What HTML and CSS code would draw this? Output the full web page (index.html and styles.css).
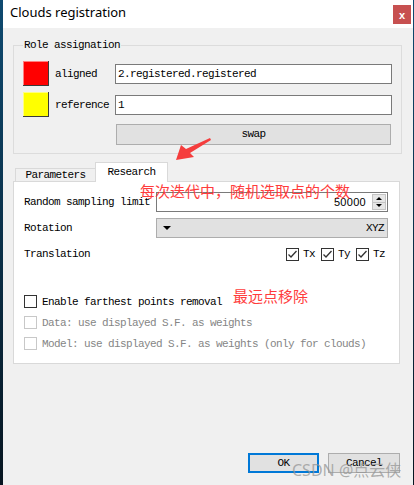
FILE: index.html
```html
<!DOCTYPE html>
<html lang="en">

<head>
    <meta charset="UTF-8">
    <meta name="viewport" content="width=device-width, initial-scale=1.0">
    <title>Clouds registration</title>
    <link rel="stylesheet" href="styles.css">
</head>

<body>
    <div class="screen">
        <div class="window">
            <div class="titlebar">
                <span class="title">Clouds registration</span>
                <span class="close">x</span>
            </div>
            <div class="content">
                <fieldset class="group">
                    <legend>Role assignation</legend>
                    <div class="roles">
                        <span class="swatch red"></span>
                        <span class="role-label">aligned</span>
                        <div class="field">2.registered.registered</div>
                        <span class="swatch yellow"></span>
                        <span class="role-label">reference</span>
                        <div class="field">1</div>
                        <div class="swap">swap</div>
                    </div>
                </fieldset>

                <div class="tabs">
                    <div class="tab">Parameters</div>
                    <div class="tab active">Research</div>
                </div>
                <div class="pane">
                    <div class="form-row">
                        <span>Random sampling limit</span>
                        <div class="spinbox">
                            <span class="spin-value">50000</span>
                            <span class="spin-arrows">
                                <span class="spin-btn"><i class="tri-up"></i></span>
                                <span class="spin-btn"><i class="tri-down"></i></span>
                            </span>
                        </div>
                    </div>
                    <div class="form-row">
                        <span>Rotation</span>
                        <div class="combo">
                            <i class="tri-down big"></i>
                            <span>XYZ</span>
                        </div>
                    </div>
                    <div class="form-row">
                        <span>Translation</span>
                        <div class="axes">
                            <label class="check"><span class="box"><svg width="11" height="11" viewBox="0 0 11 11"><polyline points="1.5,5.5 4,8 9.5,2" fill="none" stroke="#333" stroke-width="1.3"/></svg></span>Tx</label>
                            <label class="check"><span class="box"><svg width="11" height="11" viewBox="0 0 11 11"><polyline points="1.5,5.5 4,8 9.5,2" fill="none" stroke="#333" stroke-width="1.3"/></svg></span>Ty</label>
                            <label class="check"><span class="box"><svg width="11" height="11" viewBox="0 0 11 11"><polyline points="1.5,5.5 4,8 9.5,2" fill="none" stroke="#333" stroke-width="1.3"/></svg></span>Tz</label>
                        </div>
                    </div>

                    <div class="options">
                        <label class="check option"><span class="box"></span>Enable farthest points removal</label>
                        <label class="check option disabled"><span class="box"></span>Data: use displayed S.F. as weights</label>
                        <label class="check option disabled"><span class="box"></span>Model: use displayed S.F. as weights (only for clouds)</label>
                    </div>
                </div>

                <div class="actions">
                    <div class="btn default">OK</div>
                    <div class="btn">Cancel</div>
                </div>
            </div>
        </div>

        <!-- annotations drawn over the screenshot -->
        <svg class="arrow" width="40" height="26" viewBox="0 0 40 26">
            <polygon points="0,22 5,7 10,11 34,0 35,2 14,15 18,19" fill="#f53d3d"/>
        </svg>
        <div class="note note-sampling">每次迭代中，随机选取点的个数</div>
        <div class="note note-removal">最远点移除</div>
        <div class="watermark">CSDN @点云侠</div>
    </div>
</body>

</html>
```

FILE: styles.css
```css
* {
    box-sizing: border-box;
    margin: 0;
    padding: 0;
}

body {
    width: 414px;
    height: 485px;
    overflow: hidden;
    background: linear-gradient(#0e4a70, #071520);
    font-family: "Liberation Mono", monospace;
    font-size: 11px;
    letter-spacing: -0.6px;
    color: #000;
}

.screen {
    position: relative;
    height: 485px;
    padding-left: 3px;
}

.window {
    width: 410px;
    height: 485px;
    background: #f0f0f0;
    display: flex;
    flex-direction: column;
}

.titlebar {
    height: 28px;
    flex-shrink: 0;
    background: white;
    display: flex;
    justify-content: space-between;
    align-items: flex-start;
    padding: 0 2px 0 7px;
}

.title {
    font-family: "Noto Sans", sans-serif;
    font-size: 13px;
    letter-spacing: 0;
    line-height: 25px;
}

.close {
    margin-top: 5px;
    width: 18px;
    height: 19px;
    background: #c75050;
    color: white;
    font-family: "Liberation Sans", sans-serif;
    font-weight: bold;
    font-size: 11px;
    letter-spacing: 0;
    display: flex;
    align-items: center;
    justify-content: center;
}

.content {
    flex: 1;
    display: flex;
    flex-direction: column;
    padding: 10px 11px 12px 10px;
}

/* Role assignation */
.group {
    border: 1px solid #dcdcdc;
    padding: 0 9px 8px 9px;
}

.group legend {
    padding: 0 1px;
    line-height: 14px;
}

.roles {
    display: grid;
    grid-template-columns: 32px 60px 1fr;
    row-gap: 6px;
    align-items: center;
    padding-top: 9px;
}

.swatch {
    width: 26px;
    height: 25px;
    box-shadow: inset -1px -1px 0 #3a3a3a, inset 1px 1px 0 rgba(255, 255, 255, 0.5);
}

.red {
    background: #ff0000;
}

.yellow {
    background: #ffff00;
}

.role-label {
    white-space: nowrap;
}

.field {
    height: 20px;
    background: white;
    border: 1px solid #7a7a7a;
    padding-left: 2px;
    line-height: 18px;
}

.swap {
    grid-column: 3;
    margin: 1px 1px 0;
    height: 21px;
    background: #e1e1e1;
    border: 1px solid #adadad;
    text-align: center;
    line-height: 19px;
}

/* tabs */
.tabs {
    margin: 8px 2px 0 0;
    height: 19px;
    display: flex;
    align-items: flex-end;
    padding-left: 2px;
}

.tab {
    height: 13px;
    width: 81px;
    border: 1px solid #d9d9d9;
    border-bottom: none;
    text-align: center;
    line-height: 13px;
}

.tab.active {
    position: relative;
    height: 20px;
    width: 73px;
    margin-left: -1px;
    margin-bottom: -1px;
    background: white;
    line-height: 18px;
}

.pane {
    margin-right: 2px;
    height: 183px;
    background: white;
    border: 1px solid #d9d9d9;
    padding: 10px 11px 0 10px;
}

.form-row {
    display: grid;
    grid-template-columns: 132px 1fr;
    align-items: center;
    height: 20px;
    margin-bottom: 6px;
}

.spinbox {
    height: 20px;
    background: white;
    border: 1px solid #7a7a7a;
    display: flex;
    justify-content: flex-end;
    align-items: center;
    padding-right: 1px;
}

.spin-value {
    font-family: "Liberation Sans", sans-serif;
    font-size: 11px;
    letter-spacing: 0.3px;
    margin-right: 6px;
}

.spin-arrows {
    width: 14px;
    height: 16px;
    display: flex;
    flex-direction: column;
    border: 1px solid #c4c4c4;
    background: #e6e6e6;
}

.spin-btn {
    flex: 1;
    display: flex;
    align-items: center;
    justify-content: center;
}

.spin-btn + .spin-btn {
    border-top: 1px solid #c4c4c4;
}

.tri-up {
    border-left: 3px solid transparent;
    border-right: 3px solid transparent;
    border-bottom: 3px solid #000;
}

.tri-down {
    border-left: 3px solid transparent;
    border-right: 3px solid transparent;
    border-top: 3px solid #000;
}

.tri-down.big {
    border-left-width: 4px;
    border-right-width: 4px;
    border-top-width: 4px;
}

.combo {
    height: 20px;
    background: #e1e1e1;
    border: 1px solid #adadad;
    display: flex;
    justify-content: space-between;
    align-items: center;
    padding: 0 3px 0 6px;
}

.axes {
    display: flex;
    justify-content: flex-end;
    gap: 6px;
    padding-right: 3px;
}

.check {
    display: flex;
    align-items: center;
    gap: 4px;
}

.box {
    width: 13px;
    height: 13px;
    border: 1px solid #333;
    background: white;
    display: flex;
    align-items: center;
    justify-content: center;
}

.options {
    padding-top: 21px;
}

.option {
    height: 21px;
    gap: 5px;
}

.option.disabled {
    color: #858585;
}

.option.disabled .box {
    border-color: #c8c8c8;
}

/* dialog buttons */
.actions {
    margin-top: auto;
    margin-right: 2px;
    display: flex;
    justify-content: flex-end;
    gap: 9px;
}

.btn {
    width: 72px;
    height: 20px;
    background: #e1e1e1;
    border: 1px solid #adadad;
    text-align: center;
    line-height: 18px;
}

.btn.default {
    width: 71px;
    border: 2px solid #0078d7;
    line-height: 16px;
}

/* annotations */
.arrow {
    position: absolute;
    left: 176px;
    top: 138px;
}

.note {
    position: absolute;
    font-family: "Noto Sans CJK SC", sans-serif;
    font-size: 15px;
    letter-spacing: 0;
    line-height: 16px;
    color: #ff3c3c;
}

.note-sampling {
    left: 140px;
    top: 183px;
}

.note-removal {
    left: 233px;
    top: 288px;
}

.watermark {
    position: absolute;
    left: 292px;
    top: 457px;
    font-family: "Noto Sans", "Noto Sans CJK SC", sans-serif;
    font-size: 16px;
    letter-spacing: 0;
    color: rgba(150, 150, 150, 0.75);
}
```
